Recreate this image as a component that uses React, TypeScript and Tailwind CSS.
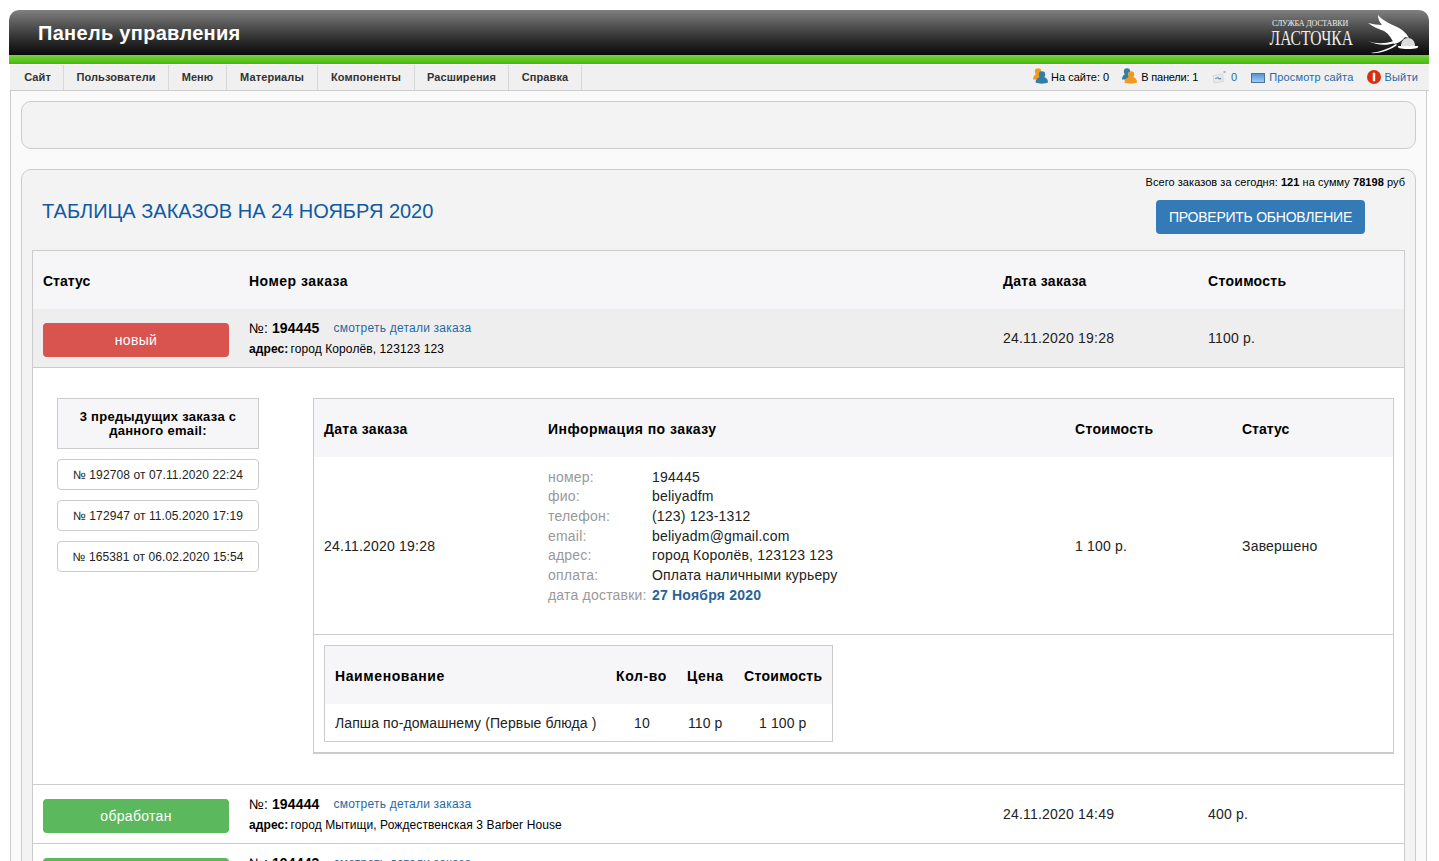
import type { ReactNode } from 'react'

const navItems = [
  { label: 'Сайт', width: 'w-[52px]' },
  { label: 'Пользователи', width: 'w-[105px]' },
  { label: 'Меню', width: 'w-[58px]' },
  { label: 'Материалы', width: 'w-[91px]' },
  { label: 'Компоненты', width: 'w-[97px]' },
  { label: 'Расширения', width: 'w-[94px]' },
  { label: 'Справка', width: 'w-[73px]' },
]

const previousOrders = [
  '№ 192708 от 07.11.2020 22:24',
  '№ 172947 от 11.05.2020 17:19',
  '№ 165381 от 06.02.2020 15:54',
]

const orderInfo = [
  ['номер:', '194445'],
  ['фио:', 'beliyadfm'],
  ['телефон:', '(123) 123-1312'],
  ['email:', 'beliyadm@gmail.com'],
  ['адрес:', 'город Королёв, 123123 123'],
  ['оплата:', 'Оплата наличными курьеру'],
]

function UsersIcon({ flip }: { flip?: boolean }) {
  const front = flip ? '#f09a1e' : '#2f7fa8'
  const back = flip ? '#2f7fa8' : '#f09a1e'
  return (
    <svg width="15" height="16" viewBox="0 0 15 16" className="-mt-[3px] shrink-0">
      <circle cx="5" cy="3.500" r="3.200" fill={back} />
      <path d="M0 11.500c0-3.500 2-5.500 5-5.500s6 2 6 5.500H0z" fill={back} />
      <circle cx="9" cy="6.500" r="3.200" fill={front} />
      <path d="M2.500 14.500c0-3.500 2.500-5.500 6.500-5.500s6 2 6 5.500c-3.500 1.500-9 1.500-12.500 0z" fill={front} />
    </svg>
  )
}

function MessageIcon() {
  return (
    <svg width="15" height="15" viewBox="0 0 15 15" className="shrink-0">
      <path d="M1 5.500l9.500-1.500 1 7.500-9.500 1.500z" fill="#e6e9ec" stroke="#cfd4d8" strokeWidth="0.8" />
      <path d="M3.500 9c1-1.500 2.500-1.500 3.500-.5s1.500.5 2-.5" fill="none" stroke="#5b87a8" strokeWidth="1.100" />
      <rect x="11.500" y="1" width="2" height="2" fill="#9db4c6" />
    </svg>
  )
}

function SiteIcon() {
  return (
    <svg width="14" height="10" viewBox="0 0 14 10" className="shrink-0">
      <defs>
        <linearGradient id="site" x1="0" y1="0" x2="0" y2="1">
          <stop offset="0" stopColor="#4f93dc" />
          <stop offset="1" stopColor="#a4cdf2" />
        </linearGradient>
      </defs>
      <rect x="0.500" y="0.500" width="13" height="9" fill="url(#site)" stroke="#4d7294" />
    </svg>
  )
}

function LogoutIcon() {
  return (
    <svg width="14" height="14" viewBox="0 0 14 14" className="-mt-[2px] shrink-0">
      <circle cx="7" cy="7" r="7" fill="#d8300f" />
      <rect x="5.800" y="2.800" width="2.400" height="8.400" rx="0.600" fill="#ffffff" />
    </svg>
  )
}

function Swallow() {
  return (
    <svg width="54" height="40" viewBox="0 0 54 40" className="shrink-0">
      <path
        d="M12 1C17 7 27 11 33 14C37 16 40 19 43 24L39 23C37 26 33 29 28 30C26 25 23 20 18 17C12 15 6 12 2 9C7 10 12 11 16 11C13 8 12 4 12 1Z"
        fill="#ffffff"
      />
      <path d="M2 27C10 30 18 30 28 27L29 29C20 32 10 31 2 27Z" fill="#ffffff" />
      <path d="M4 39C14 38 22 35 30 30L31 31C24 36 14 40 4 39Z" fill="#ffffff" />
      <path d="M35 32C35 27 38 24 42 24C46 24 49 27 49 32Z" fill="#dddddd" />
      <path d="M32 32H52C53 34 50 35 42 35C34 35 31 34 32 32Z" fill="#ffffff" />
    </svg>
  )
}

function StatusRow({
  color,
  status,
  number,
  address,
  date,
  price,
  active,
}: {
  color: string
  status: string
  number: string
  address: string
  date: string
  price: string
  active?: boolean
}) {
  return (
    <div
      className={`grid h-[59px] grid-cols-[206px_754px_205px_1fr] items-center border-b border-[#cccccc] ${
        active ? 'bg-[#eeeeee]' : 'bg-white'
      }`}
    >
      <div className="pt-[3px] pl-[10px]">
        <div className={`flex h-[34px] w-[186px] items-center justify-center rounded text-sm tracking-[0.3px] text-white ${color}`}>
          {status}
        </div>
      </div>
      <div className="pl-[10px] pt-[1px] text-xs text-black">
        <div className="flex h-[20px] items-center">
          <span className="text-sm">№:</span>
          <span className="ml-[4px] text-sm font-bold tracking-[0.15px]">{number}</span>
          <a className="ml-[14px] tracking-[0.22px] text-[#1e6aa8]">смотреть детали заказа</a>
        </div>
        <div className="mt-[1px] flex h-[20px] items-center tracking-[0.1px]">
          <b>адрес:</b>
          <span className="ml-[2px]">{address}</span>
        </div>
      </div>
      <div className="pl-[10px] text-sm tracking-[0.2px] text-[#222222]">{date}</div>
      <div className="pl-[10px] text-sm tracking-[0.2px] text-[#222222]">{price}</div>
    </div>
  )
}

function HeadCell({ children, className }: { children: ReactNode; className?: string }) {
  return <div className={`pt-[2px] text-sm font-bold text-black ${className ?? 'tracking-[0.3px]'}`}>{children}</div>
}

export default function App() {
  return (
    <div className="h-screen overflow-hidden bg-white pt-[10px] font-['Liberation_Sans',Arial,sans-serif]">
      {/* Header */}
      <div className="ml-[9px] w-[1420px]">
        <div className="flex h-[45px] items-center justify-between rounded-t-[10px] bg-gradient-to-b from-[#808080] to-[#0a0a0a] pl-[29px]">
          <h1 className="text-xl font-bold tracking-[0.3px] text-white">Панель управления</h1>
          <div className="flex items-start pr-[9px] pt-[3px]">
            <div className="mr-[13px] flex flex-col items-end pt-[5px] font-['Liberation_Serif',serif] text-[#eeeeee]">
              <span className="mr-[5px] text-[8px] leading-[10px] tracking-[-0.2px]">СЛУЖБА ДОСТАВКИ</span>
              <span className="origin-right scale-x-[0.78] text-[20px] leading-[18px]">ЛАСТОЧКА</span>
            </div>
            <Swallow />
          </div>
        </div>
        <div className="h-[9px] bg-gradient-to-b from-[#76d33a] to-[#41bb05]" />
      </div>

      {/* Nav */}
      <div className="ml-[10px] mt-[1px] flex h-[26px] w-[1419px] items-center justify-between border-b border-[#cccccc] bg-[#f0f0f0]">
        <div className="flex h-full pl-[2px]">
          {navItems.map((item) => (
            <div
              key={item.label}
              className={`flex h-full items-center justify-center border-r border-[#d8d8d8] text-[11px] font-bold tracking-[0.1px] text-[#333333] ${item.width}`}
            >
              {item.label}
            </div>
          ))}
        </div>
        <div className="flex items-center pr-[11px] text-[11px] text-black">
          <UsersIcon />
          <span className="ml-[3px]">На сайте: 0</span>
          <span className="ml-[13px]">
            <UsersIcon flip />
          </span>
          <span className="ml-[4px] tracking-[-0.2px]">В панели: 1</span>
          <span className="ml-[14px]">
            <MessageIcon />
          </span>
          <span className="ml-[4px] text-[#1e6aa8]">0</span>
          <span className="ml-[14px]">
            <SiteIcon />
          </span>
          <span className="ml-[4px] tracking-[0.15px] text-[#1e6aa8]">Просмотр сайта</span>
          <span className="ml-[14px]">
            <LogoutIcon />
          </span>
          <span className="ml-[3px] tracking-[0.2px] text-[#1e6aa8]">Выйти</span>
        </div>
      </div>

      {/* Content */}
      <div className="ml-[10px] w-[1417px] border-x border-[#cccccc] bg-[#fafafa] px-[10px] pt-[10px] pb-[20px]">
        <div className="h-[48px] rounded-[10px] border border-[#cccccc] bg-[#f3f3f3]" />

        <div className="mt-[20px] rounded-[10px] border border-[#cccccc] bg-[#f3f3f3] px-[10px] pb-[10px] pt-[5px]">
          <div className="text-right text-[11px] leading-[14px] tracking-[0.05px] text-black">
            Всего заказов за сегодня: <b>121</b> на сумму <b>78198</b> руб
          </div>
          <div className="mt-[11px] flex h-[34px] items-center justify-between pl-[10px] pr-[40px]">
            <h2 className="relative -top-[6px] text-xl text-[#0f5aa3]">ТАБЛИЦА ЗАКАЗОВ НА 24 НОЯБРЯ 2020</h2>
            <div className="flex h-[34px] w-[209px] items-center justify-center rounded bg-[#337ab7] text-sm tracking-[-0.25px] text-white">
              ПРОВЕРИТЬ ОБНОВЛЕНИЕ
            </div>
          </div>

          <div className="mt-[16px] border border-[#cccccc] bg-white">
            <div className="grid h-[58px] grid-cols-[206px_754px_205px_1fr] items-center bg-[#f6f6f8] pl-[10px]">
              <HeadCell className="tracking-normal">Статус</HeadCell>
              <HeadCell className="tracking-[0.5px]">Номер заказа</HeadCell>
              <HeadCell>Дата заказа</HeadCell>
              <HeadCell>Стоимость</HeadCell>
            </div>

            <StatusRow
              active
              color="bg-[#d9534f]"
              status="новый"
              number="194445"
              address="город Королёв, 123123 123"
              date="24.11.2020 19:28"
              price="1100 р."
            />

            {/* Order details */}
            <div className="flex h-[417px] items-start gap-[54px] border-b border-[#cccccc] pl-[24px] pr-[10px] pt-[30px]">
              <div className="w-[202px]">
                <div className="flex h-[51px] items-center justify-center border border-[#cccccc] bg-[#f6f6f8] px-[10px] text-center text-[13px] font-bold leading-[14px] tracking-[0.3px] text-black">
                  3 предыдущих заказа с данного email:
                </div>
                {previousOrders.map((order) => (
                  <div
                    key={order}
                    className="mt-[10px] flex h-[31px] items-center justify-center rounded border border-[#cccccc] bg-white text-xs tracking-[0.1px] text-[#222222]"
                  >
                    {order}
                  </div>
                ))}
              </div>

              <div className="w-[1081px] border border-b-2 border-[#cccccc]">
                <div className="grid h-[58px] grid-cols-[224px_527px_167px_1fr] items-center bg-[#f6f6f8] pl-[10px]">
                  <HeadCell>Дата заказа</HeadCell>
                  <HeadCell className="tracking-[0.45px]">Информация по заказу</HeadCell>
                  <HeadCell>Стоимость</HeadCell>
                  <HeadCell className="tracking-normal">Статус</HeadCell>
                </div>
                <div className="grid h-[178px] grid-cols-[224px_527px_167px_1fr] items-center border-b border-[#cccccc] pl-[10px] text-sm tracking-[0.2px] text-[#222222]">
                  <div>24.11.2020 19:28</div>
                  <div className="pb-[18px] leading-[19.7px]">
                    {orderInfo.map(([label, value]) => (
                      <div key={label} className="flex">
                        <span className="w-[104px] text-[#999999]">{label}</span>
                        <span>{value}</span>
                      </div>
                    ))}
                    <div className="flex">
                      <span className="w-[104px] text-[#999999]">дата доставки:</span>
                      <b className="text-[#2a6496]">27 Ноября 2020</b>
                    </div>
                  </div>
                  <div>1 100 р.</div>
                  <div>Завершено</div>
                </div>
                <div className="p-[10px]">
                  <div className="w-[509px] border border-[#cccccc]">
                    <div className="grid h-[58px] grid-cols-[281px_71px_57px_1fr] items-center bg-[#f6f6f8] pl-[10px]">
                      <HeadCell className="tracking-[0.6px]">Наименование</HeadCell>
                      <HeadCell className="tracking-[0.6px]">Кол-во</HeadCell>
                      <HeadCell className="tracking-[0.5px]">Цена</HeadCell>
                      <HeadCell>Стоимость</HeadCell>
                    </div>
                    <div className="grid h-[37px] grid-cols-[271px_71px_57px_1fr] items-center pl-[10px] text-sm tracking-[0.1px] text-[#222222]">
                      <div>Лапша по-домашнему (Первые блюда )</div>
                      <div className="pl-[28px]">10</div>
                      <div className="pl-[11px]">110 р</div>
                      <div className="pl-[25px]">1 100 р</div>
                    </div>
                  </div>
                </div>
              </div>
            </div>

            <StatusRow
              color="bg-[#5cb85c]"
              status="обработан"
              number="194444"
              address="город Мытищи, Рождественская 3 Barber House"
              date="24.11.2020 14:49"
              price="400 р."
            />
            <StatusRow
              color="bg-[#5cb85c]"
              status="обработан"
              number="194443"
              address="город Мытищи"
              date="24.11.2020 14:20"
              price="400 р."
            />
          </div>
        </div>
      </div>
    </div>
  )
}
